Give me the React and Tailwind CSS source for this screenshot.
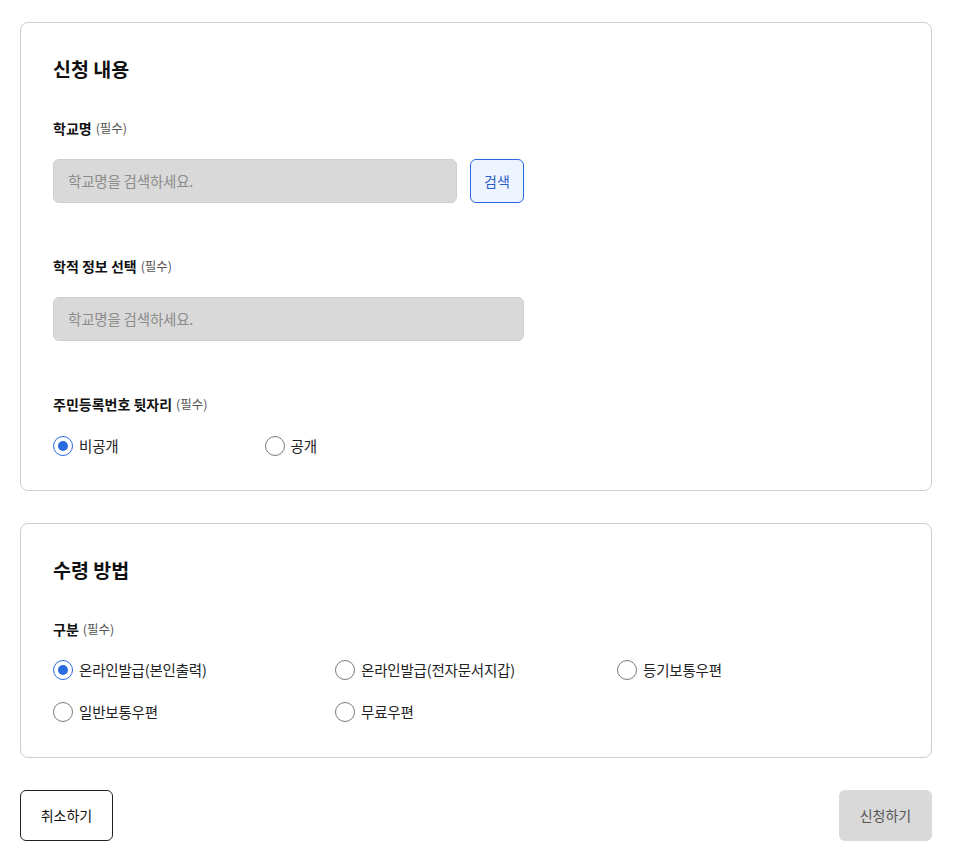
import React from "react";

function Radio({ checked, label }) {
  return (
    <label className="flex items-center gap-[6px] h-6">
      <span
        className={
          checked
            ? "w-5 h-5 rounded-full border-[1.5px] border-[#2a6ae0] flex items-center justify-center"
            : "w-5 h-5 rounded-full border-[1.5px] border-[#7a7a7a]"
        }
      >
        {checked && <span className="w-[10px] h-[10px] rounded-full bg-[#2a6ae0]" />}
      </span>
      <span className="text-[14.5px] tracking-[-0.2px] text-[#222] leading-6">{label}</span>
    </label>
  );
}

function Label({ children }) {
  return (
    <div className="h-5 flex items-center text-[14px] font-bold text-[#111] leading-5">
      {children}
      <span className="ml-1 text-[12.5px] font-normal text-[#555]">(필수)</span>
    </div>
  );
}

function Input({ className }) {
  return (
    <div
      className={
        "h-[44px] rounded-[6px] border border-[#cfcfcf] bg-[#d9d9d9] flex items-center px-[14px] text-[14.5px] tracking-[-0.2px] text-[#8c8c8c] " +
        className
      }
    >
      학교명을 검색하세요.
    </div>
  );
}

export default function App() {
  return (
    <div
      className="w-[952px] h-[860px] bg-white px-5 pt-[22px]"
      style={{ fontFamily: '"Noto Sans CJK KR", "Noto Sans", sans-serif' }}
    >
      <section className="border border-[#cfcfcf] rounded-[8px] px-[32px] pt-[32px] pb-[32px]">
        <h2 className="text-[19.5px] font-bold text-[#111] leading-[28px]">신청 내용</h2>
        <div className="mt-[35px]">
          <Label>학교명</Label>
          <div className="mt-[21px] flex gap-[13px]">
            <Input className="w-[404px]" />
            <button className="w-[54px] h-[44px] rounded-[6px] border border-[#2a6ae0] bg-[#eef4ff] text-[14px] text-[#2a5fc8]">
              검색
            </button>
          </div>
        </div>
        <div className="mt-[53px]">
          <Label>학적 정보 선택</Label>
          <Input className="mt-[21px] w-[471px]" />
        </div>
        <div className="mt-[53px]">
          <Label>주민등록번호 뒷자리</Label>
          <div className="mt-[20px] grid grid-cols-4">
            <Radio checked label="비공개" />
            <Radio label="공개" />
          </div>
        </div>
      </section>

      <section className="mt-[32px] border border-[#cfcfcf] rounded-[8px] px-[32px] pt-[32px] pb-[33px]">
        <h2 className="text-[19.5px] font-bold text-[#111] leading-[28px]">수령 방법</h2>
        <div className="mt-[35px]">
          <Label>구분</Label>
          <div className="mt-[19px] grid grid-cols-3 gap-y-[18px]">
            <Radio checked label="온라인발급(본인출력)" />
            <Radio label="온라인발급(전자문서지갑)" />
            <Radio label="등기보통우편" />
            <Radio label="일반보통우편" />
            <Radio label="무료우편" />
          </div>
        </div>
      </section>

      <div className="mt-[32px] flex justify-between">
        <button className="w-[93px] h-[51px] rounded-[6px] border border-[#222] bg-white text-[14px] text-[#111]">
          취소하기
        </button>
        <button className="w-[93px] h-[51px] rounded-[6px] bg-[#d9d9d9] text-[14px] text-[#555]">
          신청하기
        </button>
      </div>
    </div>
  );
}
